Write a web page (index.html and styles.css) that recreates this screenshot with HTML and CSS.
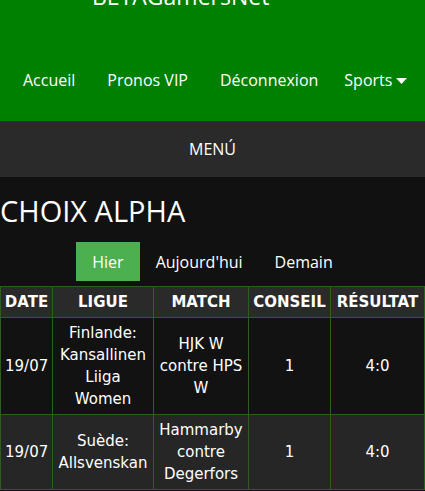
FILE: index.html
```html
<!DOCTYPE html>
<html lang="fr">
<head>
    <meta charset="UTF-8">
    <meta name="viewport" content="width=device-width, initial-scale=1.0">
    <title>Choix Alpha</title>
    <link rel="stylesheet" href="styles.css">
</head>
<body>
    <header class="topbar">
        <div class="brand">BETAGamersNet</div>
        <nav class="nav">
            <a href="#" class="nav-link">Accueil</a>
            <a href="#" class="nav-link">Pronos VIP</a>
            <a href="#" class="nav-link">Déconnexion</a>
            <a href="#" class="nav-link dropdown">Sports
                <svg class="caret" width="11" height="6" viewBox="0 0 11 6"><path d="M0 0h11L5.5 6z" fill="#fff"/></svg>
            </a>
        </nav>
    </header>

    <div class="menu-bar">MENÚ</div>

    <main class="content">
        <h1>CHOIX ALPHA</h1>

        <div class="tabs">
            <button class="tab active">Hier</button>
            <button class="tab">Aujourd'hui</button>
            <button class="tab">Demain</button>
        </div>

        <table class="picks">
            <thead>
                <tr>
                    <th class="col-date">DATE</th>
                    <th class="col-league">LIGUE</th>
                    <th class="col-match">MATCH</th>
                    <th class="col-tip">CONSEIL</th>
                    <th class="col-result">RÉSULTAT</th>
                </tr>
            </thead>
            <tbody>
                <tr>
                    <td>19/07</td>
                    <td>Finlande: Kansallinen Liiga Women</td>
                    <td>HJK W contre HPS W</td>
                    <td>1</td>
                    <td class="win">4:0</td>
                </tr>
                <tr>
                    <td>19/07</td>
                    <td>Suède: Allsvenskan</td>
                    <td>Hammarby contre Degerfors</td>
                    <td>1</td>
                    <td class="win">4:0</td>
                </tr>
            </tbody>
        </table>
    </main>
</body>
</html>
```

FILE: styles.css
```css
body {
    margin: 0;
    background-color: #111111;
    color: #ffffff;
    font-family: 'Open Sans', 'Noto Sans', sans-serif;
    overflow: hidden;
}
.topbar {
    background-color: #008000;
    height: 121px;
    overflow: hidden;
}
.brand {
    font-size: 23px;
    line-height: 28px;
    margin-top: -18px;
    padding-left: 92px;
}
.nav {
    display: flex;
    align-items: center;
    margin-top: 59px;
    padding-left: 7px;
}
.nav-link {
    color: #ffffff;
    text-decoration: none;
    font-size: 16px;
    line-height: 22px;
    padding: 0 16px;
}
.dropdown {
    padding-left: 10px;
    display: flex;
    align-items: center;
    gap: 4px;
}
.caret {
    margin-top: 1px;
}
.menu-bar {
    background-color: #2a2a2a;
    height: 56px;
    line-height: 56px;
    text-align: center;
    font-size: 16px;
}
.content h1 {
    font-size: 29px;
    font-weight: normal;
    line-height: 36px;
    margin: 16px 0 13px;
}
.tabs {
    display: flex;
    justify-content: center;
    margin-bottom: 5px;
}
.tab {
    background: none;
    border: none;
    color: #ffffff;
    font-family: 'Open Sans', 'Noto Sans', sans-serif;
    font-size: 16px;
    height: 39px;
    padding: 0 16px;
}
.tab.active {
    background-color: #4caf50;
}
.picks {
    border-collapse: collapse;
    table-layout: fixed;
    width: 424px;
    font-family: 'DejaVu Sans', Verdana, sans-serif;
    font-size: 15px;
    line-height: 22px;
    text-align: center;
}
.picks th,
.picks td {
    border: 1px solid #2b5f1f;
    padding: 4px;
}
.picks th {
    box-sizing: border-box;
    background-color: #2a2a2a;
    font-weight: bold;
    padding: 4px 1px;
    white-space: nowrap;
}
.picks tbody tr:nth-child(1) td {
    background-color: #121212;
}
.picks tbody tr:nth-child(2) td {
    background-color: #262626;
}
.picks td.win {
    background-color: #4caf50;
}
.col-date { width: 52px; }
.col-league { width: 101px; }
.col-match { width: 95px; }
.col-tip { width: 82px; }
.col-result { width: 94px; }
```
